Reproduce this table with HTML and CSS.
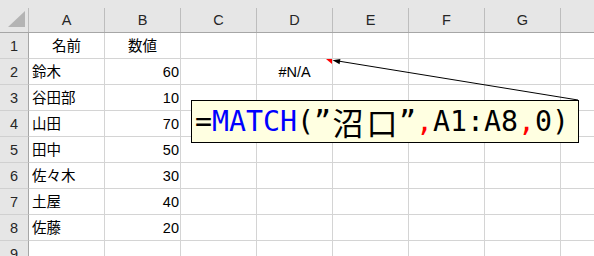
FILE: index.html
```html
<!DOCTYPE html>
<html lang="ja">
<head>
    <meta charset="UTF-8">
    <meta name="viewport" content="width=device-width, initial-scale=1.0">
    <title>MATCH</title>
    <link rel="stylesheet" href="styles.css">
</head>
<body>
    <div class="sheet">
        <!-- column headers -->
        <div class="hdr">
            <div class="corner">
                <svg width="28" height="24" viewBox="0 0 28 24"><polygon points="8,19 25,19 25,3" fill="#b4b4b4"/></svg>
            </div>
            <div class="ch">A</div>
            <div class="ch">B</div>
            <div class="ch">C</div>
            <div class="ch">D</div>
            <div class="ch">E</div>
            <div class="ch">F</div>
            <div class="ch">G</div>
            <div class="ch"></div>
        </div>

        <div class="row">
            <div class="rh">1</div>
            <div class="c ctr">名前</div>
            <div class="c ctr">数値</div>
            <div class="c"></div><div class="c"></div><div class="c"></div><div class="c"></div><div class="c"></div><div class="c"></div>
        </div>
        <div class="row">
            <div class="rh">2</div>
            <div class="c">鈴木</div>
            <div class="c num">60</div>
            <div class="c"></div>
            <div class="c ctr note">#N/A</div>
            <div class="c"></div><div class="c"></div><div class="c"></div><div class="c"></div>
        </div>
        <div class="row">
            <div class="rh">3</div>
            <div class="c">谷田部</div>
            <div class="c num">10</div>
            <div class="c"></div><div class="c"></div><div class="c"></div><div class="c"></div><div class="c"></div><div class="c"></div>
        </div>
        <div class="row">
            <div class="rh">4</div>
            <div class="c">山田</div>
            <div class="c num">70</div>
            <div class="c"></div><div class="c"></div><div class="c"></div><div class="c"></div><div class="c"></div><div class="c"></div>
        </div>
        <div class="row">
            <div class="rh">5</div>
            <div class="c">田中</div>
            <div class="c num">50</div>
            <div class="c"></div><div class="c"></div><div class="c"></div><div class="c"></div><div class="c"></div><div class="c"></div>
        </div>
        <div class="row">
            <div class="rh">6</div>
            <div class="c">佐々木</div>
            <div class="c num">30</div>
            <div class="c"></div><div class="c"></div><div class="c"></div><div class="c"></div><div class="c"></div><div class="c"></div>
        </div>
        <div class="row">
            <div class="rh">7</div>
            <div class="c">土屋</div>
            <div class="c num">40</div>
            <div class="c"></div><div class="c"></div><div class="c"></div><div class="c"></div><div class="c"></div><div class="c"></div>
        </div>
        <div class="row">
            <div class="rh">8</div>
            <div class="c">佐藤</div>
            <div class="c num">20</div>
            <div class="c"></div><div class="c"></div><div class="c"></div><div class="c"></div><div class="c"></div><div class="c"></div>
        </div>
        <div class="row">
            <div class="rh">9</div>
            <div class="c"></div><div class="c"></div><div class="c"></div><div class="c"></div><div class="c"></div><div class="c"></div><div class="c"></div><div class="c"></div>
        </div>

        <!-- leader line from the callout to D2 -->
        <svg class="leader" width="594" height="256" viewBox="0 0 594 256">
            <line x1="578" y1="100" x2="338" y2="61" stroke="#000" stroke-width="1"/>
            <polygon points="332.5,60.3 340.4,58.9 339.6,64.2" fill="#000"/>
        </svg>

        <!-- formula callout -->
        <div class="callout"><span>=</span><span class="fn">MATCH</span><span>(”</span><span class="kj">沼</span><span class="kj">口</span><span>”</span><span class="sep">,</span><span>A1:A8</span><span class="sep">,</span><span>0)</span></div>
    </div>
</body>
</html>
```

FILE: styles.css
```css
body {
    margin: 0;
    padding: 0;
    background-color: #fff;
}

.sheet {
    position: relative;
    width: 594px;
    height: 256px;
    overflow: hidden;
    font-family: "Liberation Sans", "Noto Sans CJK JP", sans-serif;
    font-size: 14.5px;
    color: #000;
}

/* header strip */
.hdr {
    display: flex;
    align-items: flex-end;
    height: 33px;
    box-sizing: border-box;
    background-color: #e6e6e6;
    border-bottom: 1px solid #a6a6a6;
}

.corner {
    flex: none;
    width: 29px;
    height: 24px;
    box-sizing: border-box;
    border-right: 1px solid #bdbdbd;
}

.corner svg {
    display: block;
}

.ch {
    flex: none;
    width: 76px;
    height: 24px;
    box-sizing: border-box;
    border-right: 1px solid #bdbdbd;
    display: flex;
    align-items: center;
    justify-content: center;
    color: #262626;
}

/* rows */
.row {
    display: flex;
    height: 26px;
}

.rh {
    flex: none;
    width: 29px;
    box-sizing: border-box;
    background-color: #e6e6e6;
    border-right: 1px solid #a6a6a6;
    border-bottom: 1px solid #d0d0d0;
    display: flex;
    align-items: center;
    justify-content: center;
    color: #262626;
}

.c {
    flex: none;
    width: 76px;
    box-sizing: border-box;
    border-right: 1px solid #d4d4d4;
    border-bottom: 1px solid #d4d4d4;
    display: flex;
    align-items: center;
    padding: 0 1px 0 3px;
    line-height: 18px;
    white-space: nowrap;
}

.ctr {
    justify-content: center;
    padding: 0;
}

.num {
    justify-content: flex-end;
}

/* red comment marker */
.note {
    position: relative;
}

.note::after {
    content: "";
    position: absolute;
    top: 0;
    right: 0;
    border-top: 5px solid #ff0000;
    border-left: 6px solid transparent;
}

.leader {
    position: absolute;
    top: 0;
    left: 0;
    pointer-events: none;
}

/* formula callout */
.callout {
    position: absolute;
    left: 191px;
    top: 100px;
    width: 388px;
    height: 43px;
    box-sizing: border-box;
    border: 1px solid #000;
    background-color: #ffffe1;
    padding-left: 3px;
    font-family: "DejaVu Sans Mono", monospace;
    font-size: 28.24px;
    line-height: 41px;
    white-space: nowrap;
    color: #000;
}

.fn {
    color: #0000ff;
}

.sep {
    color: #ff0000;
}

.kj {
    display: inline-block;
    width: 34px;
    text-align: center;
    font-family: "Noto Sans CJK JP", sans-serif;
    font-size: 31px;
    line-height: 41px;
    vertical-align: top;
}
```
